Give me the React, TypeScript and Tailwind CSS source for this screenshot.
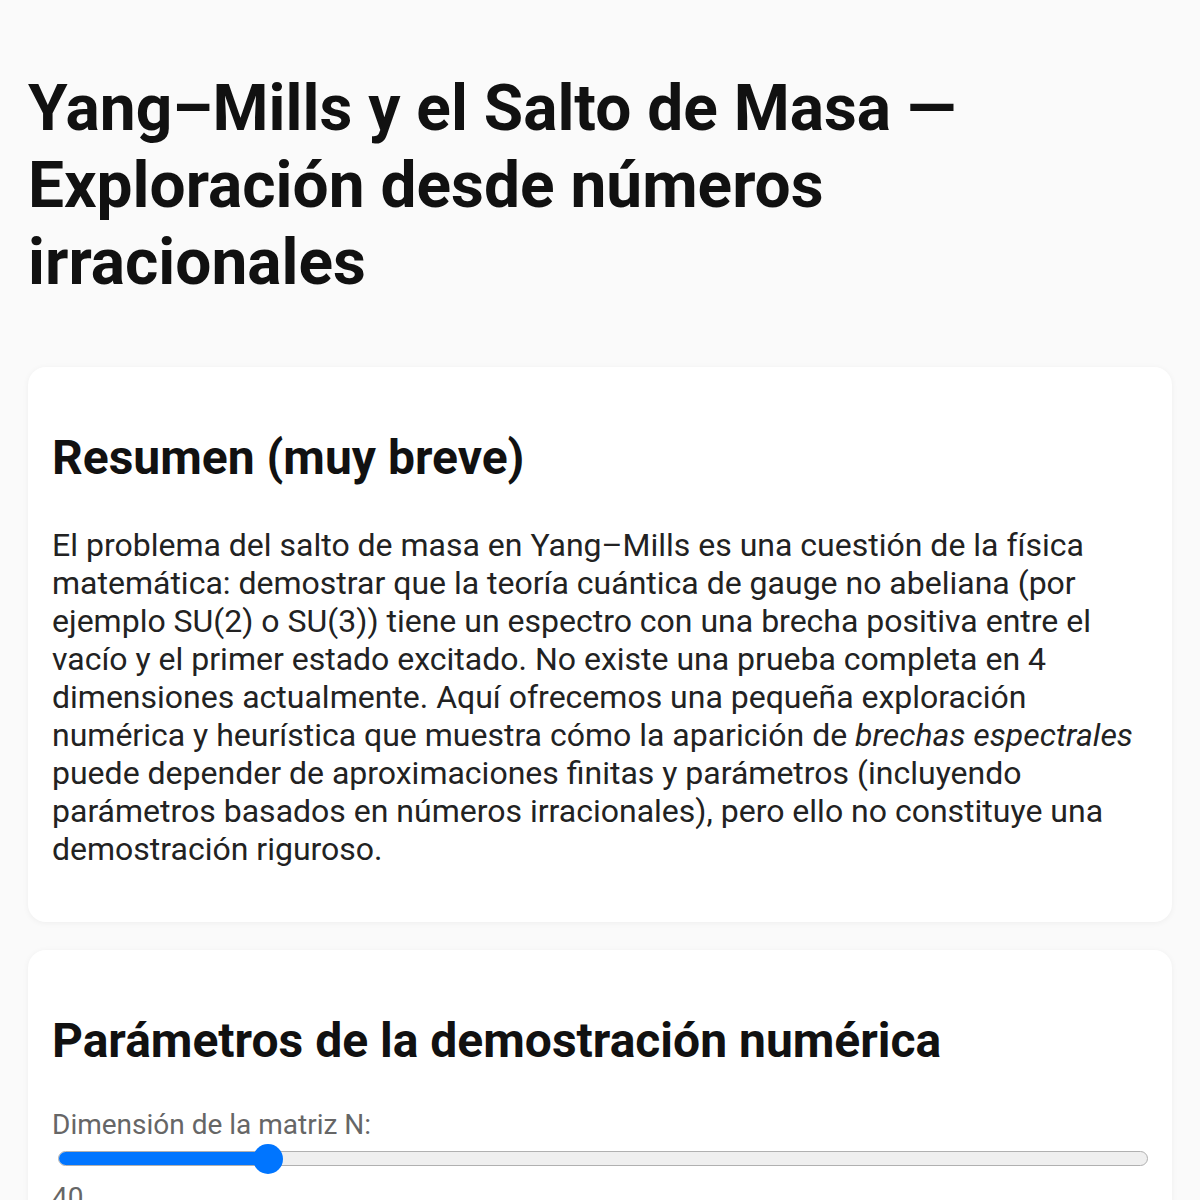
import React from "react";

export default function App() {
  return (
    <div className="min-h-[1200px] bg-[#fafafa] px-[28px] pt-[70px] pb-10 text-[#222] leading-[1.2]" style={{ fontFamily: "Roboto, 'Noto Sans', sans-serif" }}>
      <h1 className="text-[64px] leading-[77px] font-bold text-[#111]">
        Yang–Mills y el Salto de Masa — Exploración desde números irracionales
      </h1>

      <div className="mt-[66px] flex flex-col gap-[28px]">
        <section className="bg-white rounded-[18px] shadow-[0_1px_6px_rgba(0,0,0,0.05)] px-[24px] pt-[62px] pb-[54px] flex flex-col gap-[39px]">
          <h2 className="text-[48px] leading-[1.2] font-bold text-[#111]">Resumen (muy breve)</h2>
          <p className="text-[32px] leading-[38px] text-[#222]">
            El problema del salto de masa en Yang–Mills es una cuestión de la física matemática: demostrar que la teoría cuántica de gauge no abeliana (por ejemplo SU(2) o SU(3)) tiene un espectro con una brecha positiva entre el vacío y el primer estado excitado. No existe una prueba completa en 4 dimensiones actualmente. Aquí ofrecemos una pequeña exploración numérica y heurística que muestra cómo la aparición de <em>brechas espectrales</em> puede depender de aproximaciones finitas y parámetros (incluyendo parámetros basados en números irracionales), pero ello no constituye una demostración riguroso.
          </p>
        </section>

        <section className="bg-white rounded-[18px] shadow-[0_1px_6px_rgba(0,0,0,0.05)] px-[24px] pt-[62px] pb-[51px] flex flex-col">
          <h2 className="text-[48px] leading-[1.2] font-bold text-[#111]">Parámetros de la demostración numérica</h2>
          <label className="mt-[39px] text-[28px] leading-[1.2] text-[#666]">Dimensión de la matriz N:</label>
          <div className="relative mt-[2px] ml-[6px] flex h-[30px] items-center">
            <div className="flex h-[15px] flex-1 overflow-hidden rounded-full border-[1.5px] border-[#b0b0b0] bg-[#efefef]">
              <div className="h-full w-[210px] bg-[#0075ff]" />
            </div>
            <div className="absolute left-[195px] top-0 h-[30px] w-[30px] rounded-full bg-[#0075ff]" />
          </div>
          <div className="mt-[7px] text-[28px] leading-[1.2] text-[#666]">40</div>
        </section>
      </div>
    </div>
  );
}
